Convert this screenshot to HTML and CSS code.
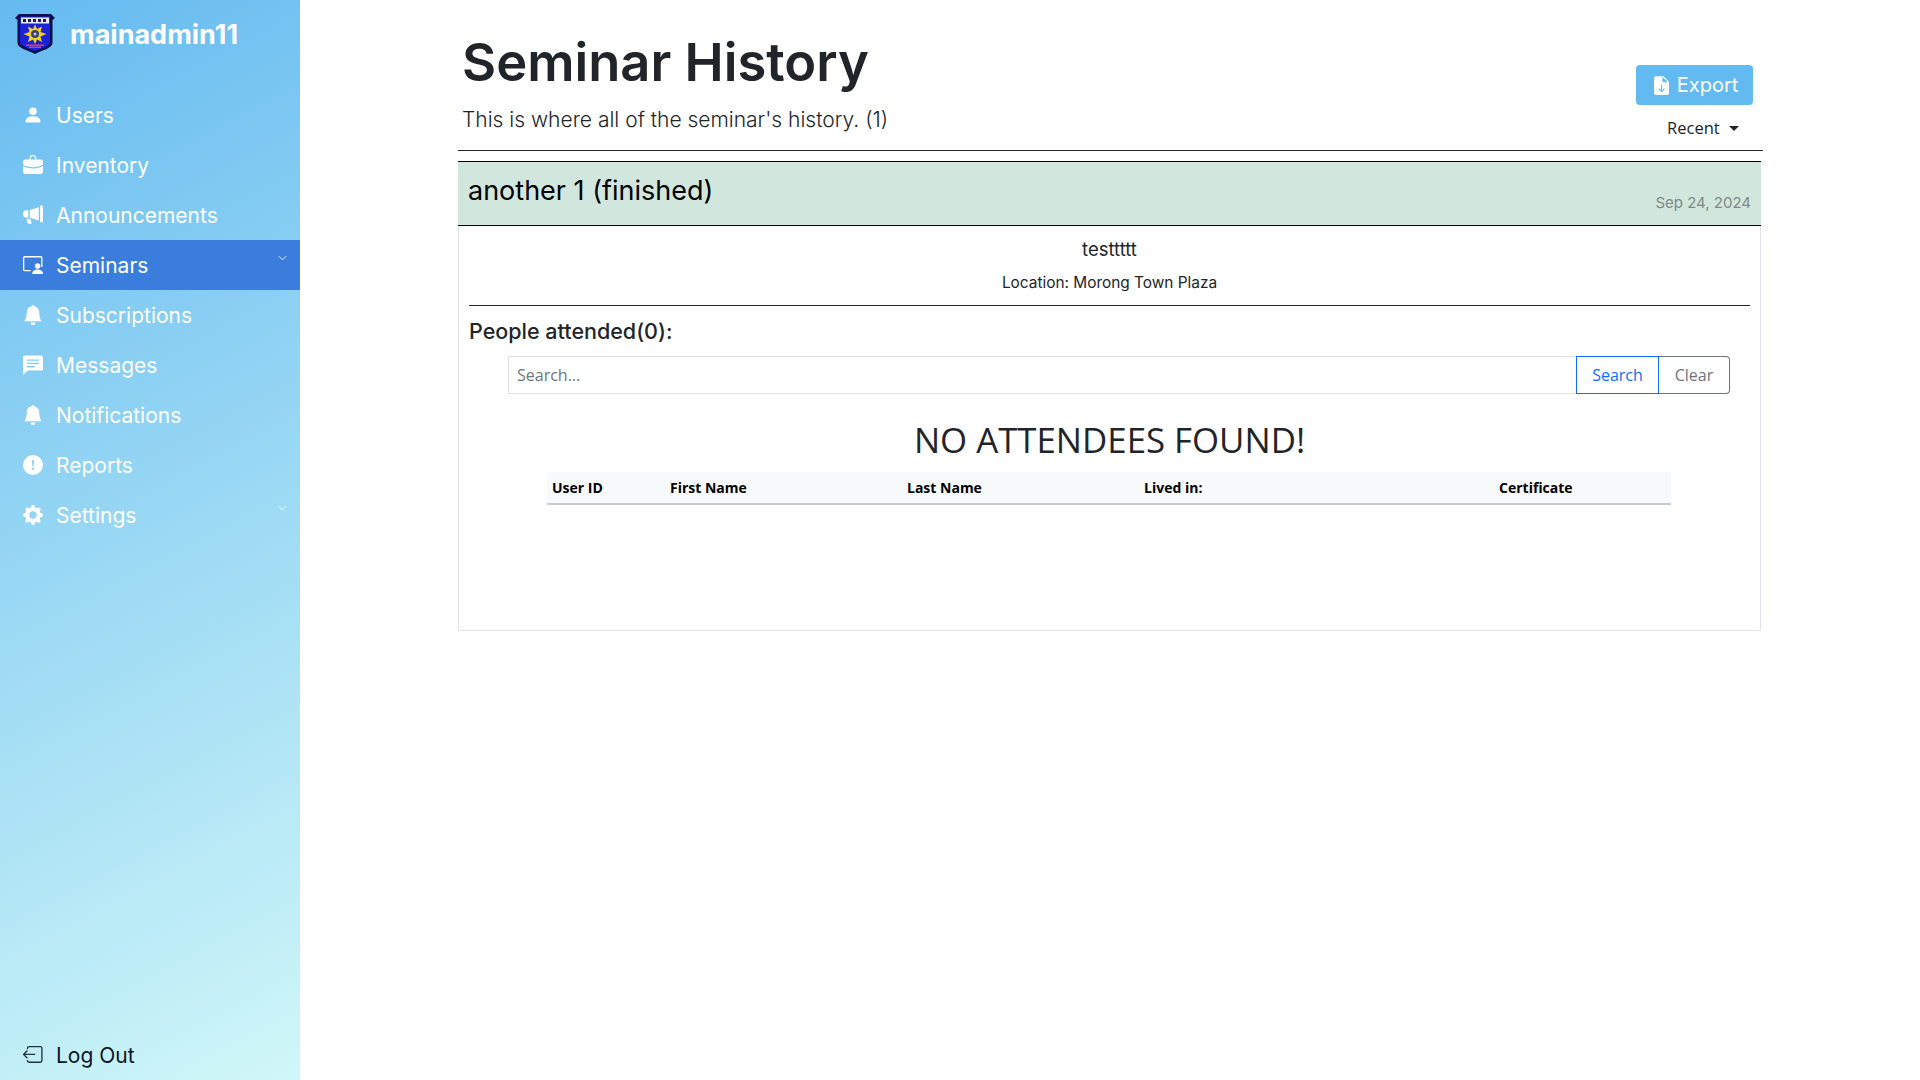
FILE: index.html
```html
<!DOCTYPE html>
<html lang="en">
<head>
    <meta charset="UTF-8">
    <title>Seminar History</title>
    <link rel="stylesheet" href="styles.css">
</head>
<body>
    <aside class="sidebar">
        <div class="brand">
            <svg class="logo" viewBox="0 0 40 42">
                <path d="M0 5 L4 1 H36 L40 5 L37.500 7 V30 C37.500 35 28 37 20 41 C12 37 2.500 35 2.500 30 V7 Z" fill="#0b0f4a"/>
                <path d="M5 3.500 H35 V29 C35 33 27 35 20 38 C13 35 5 33 5 29 Z" fill="#1c22d8"/>
                <rect x="6" y="4.500" width="28" height="6" fill="#e8e8f4"/>
                <path d="M8 6 h3 v3 h-3z M13 6 h3 v3 h-3z M18 6 h3 v3 h-3z M23 6 h3 v3 h-3z M28 6 h3 v3 h-3z" fill="#1a1a60"/>
                <path d="M20 11.500 L22 16 L27 13.500 L25.500 19 L31.500 21 L25.500 23.500 L27 29 L22 26.500 L20 31 L18 26.500 L13 29 L14.500 23.500 L8.500 21 L14.500 19 L13 13.500 L18 16 Z" fill="#f2d21a"/>
                <circle cx="20" cy="21" r="4" fill="#3a3f7a"/>
                <circle cx="20" cy="21" r="1.500" fill="#c9cbe0"/>
                <rect x="11" y="31.500" width="18" height="1.500" fill="#d8425a"/>
                <rect x="14" y="33.500" width="12" height="1.500" fill="#d8425a"/>
            </svg>
            <span class="brand-name">mainadmin11</span>
        </div>
        <nav class="menu">
            <a class="menu-item">
                <svg class="icon" viewBox="0 0 16 16"><path d="M3 14s-1 0-1-1 1-4 6-4 6 3 6 4-1 1-1 1H3Zm5-6a3 3 0 1 0 0-6 3 3 0 0 0 0 6Z"/></svg>
                <span>Users</span>
            </a>
            <a class="menu-item">
                <svg class="icon" viewBox="1 1 18 18"><path d="M7 5V3.500C7 2.100 8.100 1 9.500 1h1C11.900 1 13 2.100 13 3.500V5h-1.200V3.500c0-.7-.6-1.300-1.300-1.300h-1c-.7 0-1.300.6-1.300 1.300V5Z"/><path d="M3 5h14c1.100 0 2 .9 2 2v2.500c-2 1.700-5.500 2.500-9 2.500s-7-.8-9-2.500V7c0-1.100.9-2 2-2Z"/><path d="M1 11c2.300 1.500 5.600 2.200 9 2.200s6.700-.7 9-2.200v5c0 1.100-.9 2-2 2H3c-1.100 0-2-.9-2-2v-5Z"/></svg>
                <span>Inventory</span>
            </a>
            <a class="menu-item">
                <svg class="icon" viewBox="1 1 18 18"><path d="M19 1.500v15h-2.600v-15Z"/><path d="M15.200 3v12L7 12.500V5.500Z"/><path d="M5.800 5.700v6.600H3.500C2 12.300 1 11 1 9s1-3.300 2.500-3.300Z"/><path d="M4 13.300h3.500l1.500 4.500H5.500Z"/></svg>
                <span>Announcements</span>
            </a>
            <a class="menu-item active">
                <svg class="icon" viewBox="1 1 18.500 18.500"><path d="M2.500 2h15A1.500 1.500 0 0 1 19 3.500V12h-1.200V3.500a.3.300 0 0 0-.3-.3h-15a.3.300 0 0 0-.3.300v11c0 .2.100.3.300.3H8V16H2.500A1.500 1.500 0 0 1 1 14.500v-11A1.500 1.500 0 0 1 2.500 2Z"/><circle cx="14.500" cy="11.200" r="2.500"/><path d="M9.500 18.500c0-2.500 2-4 5-4s5 1.500 5 4Z"/></svg>
                <span>Seminars</span>
                <svg class="chevron" viewBox="0 0 10 6"><path d="M1 1l4 4 4-4"/></svg>
            </a>
            <a class="menu-item">
                <svg class="icon" viewBox="0 0 16 16"><path d="M8 16a2 2 0 0 0 2-2H6a2 2 0 0 0 2 2zm.995-14.901a1 1 0 1 0-1.990 0A5.002 5.002 0 0 0 3 6c0 1.098-.5 6-2 7h14c-1.500-1-2-5.902-2-7 0-2.420-1.720-4.440-4.005-4.901z"/></svg>
                <span>Subscriptions</span>
            </a>
            <a class="menu-item">
                <svg class="icon" viewBox="1 1 18 18"><path fill-rule="evenodd" d="M2.500 1.500h15c.8 0 1.500.7 1.500 1.500v10.500c0 .8-.7 1.500-1.500 1.500H5.500L1 19V3c0-.8.7-1.500 1.500-1.500ZM4.500 5v1.200h11V5Zm0 3v1.200h11V8Zm0 3v1.200h7V11Z"/></svg>
                <span>Messages</span>
            </a>
            <a class="menu-item">
                <svg class="icon" viewBox="0 0 16 16"><path d="M8 16a2 2 0 0 0 2-2H6a2 2 0 0 0 2 2zm.995-14.901a1 1 0 1 0-1.990 0A5.002 5.002 0 0 0 3 6c0 1.098-.5 6-2 7h14c-1.500-1-2-5.902-2-7 0-2.420-1.720-4.440-4.005-4.901z"/></svg>
                <span>Notifications</span>
            </a>
            <a class="menu-item">
                <svg class="icon" viewBox="0 0 16 16"><path d="M16 8A8 8 0 1 1 0 8a8 8 0 0 1 16 0zM8 4a.905.905 0 0 0-.9.995l.35 3.507a.552.552 0 0 0 1.100 0l.35-3.507A.905.905 0 0 0 8 4zm.002 6a1 1 0 1 0 0 2 1 1 0 0 0 0-2z"/></svg>
                <span>Reports</span>
            </a>
            <a class="menu-item">
                <svg class="icon" viewBox="0 0 16 16"><path d="M9.405 1.050c-.413-1.400-2.397-1.400-2.810 0l-.1.340a1.464 1.464 0 0 1-2.105.872l-.31-.17c-1.283-.698-2.686.705-1.987 1.987l.169.311c.446.820.023 1.841-.872 2.105l-.34.1c-1.400.413-1.400 2.397 0 2.810l.34.1a1.464 1.464 0 0 1 .872 2.105l-.17.31c-.698 1.283.705 2.686 1.987 1.987l.311-.169a1.464 1.464 0 0 1 2.105.872l.1.340c.413 1.400 2.397 1.400 2.810 0l.1-.34a1.464 1.464 0 0 1 2.105-.872l.31.170c1.283.698 2.686-.705 1.987-1.987l-.169-.311a1.464 1.464 0 0 1 .872-2.105l.34-.1c1.400-.413 1.400-2.397 0-2.810l-.34-.1a1.464 1.464 0 0 1-.872-2.105l.17-.31c.698-1.283-.705-2.686-1.987-1.987l-.311.169a1.464 1.464 0 0 1-2.105-.872l-.1-.34zM8 10.930a2.929 2.929 0 1 1 0-5.860 2.929 2.929 0 0 1 0 5.858z"/></svg>
                <span>Settings</span>
                <svg class="chevron" viewBox="0 0 10 6"><path d="M1 1l4 4 4-4"/></svg>
            </a>
        </nav>
        <a class="logout">
            <svg class="logout-icon" viewBox="1 2 18 16"><path d="M5 4.500V4a1.500 1.500 0 0 1 1.500-1.500h10A1.500 1.500 0 0 1 18 4v11a1.500 1.500 0 0 1-1.500 1.500h-10A1.500 1.500 0 0 1 5 15v-.5"/><path d="M12 9.500H1.500M5 6 1.500 9.500 5 13"/></svg>
            <span>Log Out</span>
        </a>
    </aside>

    <main class="main">
        <div class="page-head">
            <div class="page-title">
                <h1>Seminar History</h1>
                <p>This is where all of the seminar's history. (1)</p>
            </div>
            <div class="page-actions">
                <button class="export-btn">
                    <svg class="export-icon" viewBox="0 0 16 20"><path fill-rule="evenodd" d="M2 0h8l6 6v12a2 2 0 0 1-2 2H2a2 2 0 0 1-2-2V2a2 2 0 0 1 2-2Zm7 1v5.500h6ZM7.400 9v6L5.300 12.900l-.8.8L8 17.200l3.500-3.500-.8-.8L8.600 15V9Z"/></svg>
                    Export
                </button>
                <div class="sort">Recent <span class="caret"></span></div>
            </div>
        </div>
        <hr class="head-rule">

        <section class="card">
            <header class="card-head">
                <h2>another 1 (finished)</h2>
                <span class="card-date">Sep 24, 2024</span>
            </header>
            <div class="card-body">
                <p class="desc">testtttt</p>
                <p class="location">Location: Morong Town Plaza</p>
                <hr class="body-rule">
                <h3>People attended(0):</h3>
                <form class="search">
                    <input class="search-input" type="text" placeholder="Search...">
                    <button class="search-btn" type="button">Search</button>
                    <button class="clear-btn" type="button">Clear</button>
                </form>
                <h2 class="empty">NO ATTENDEES FOUND!</h2>
                <div class="table-row">
                    <span class="col-id">User ID</span>
                    <span class="col-name">First Name</span>
                    <span class="col-name">Last Name</span>
                    <span class="col-lived">Lived in:</span>
                    <span>Certificate</span>
                </div>
            </div>
        </section>
    </main>
</body>
</html>
```

FILE: styles.css
```css
* {
    margin: 0;
    padding: 0;
    box-sizing: border-box;
}

body {
    font-family: "Inter", "Open Sans", sans-serif;
    background: #ffffff;
    color: #212529;
    display: flex;
    height: 1080px;
    overflow: hidden;
}

.sidebar {
    width: 300px;
    flex-shrink: 0;
    height: 100%;
    display: flex;
    flex-direction: column;
    background: linear-gradient(152deg, #65baf0 0%, #d0f7f8 100%);
}

.brand {
    display: flex;
    align-items: center;
    height: 68px;
    padding-left: 15px;
    gap: 15px;
}

.logo {
    width: 40px;
    height: 42px;
}

.brand-name {
    color: #ffffff;
    font-size: 27px;
    font-weight: 700;
}

.menu {
    margin-top: 22px;
    flex: 1;
}

.menu-item {
    position: relative;
    display: flex;
    align-items: center;
    height: 50px;
    padding-left: 23px;
    gap: 13px;
    color: #ffffff;
    font-size: 21px;
}

.menu-item.active {
    background: #3b7ddd;
}

.icon {
    width: 20px;
    height: 20px;
    fill: #ffffff;
}

.chevron {
    position: absolute;
    top: 15px;
    right: 13px;
    width: 9px;
    height: 6px;
    fill: none;
    stroke: #ffffff;
    stroke-width: 1;
}

.logout {
    display: flex;
    align-items: center;
    height: 50px;
    padding-left: 23px;
    gap: 13px;
    color: #0b1524;
    font-size: 21px;
}

.logout-icon {
    width: 20px;
    height: 18px;
    fill: none;
    stroke: #24323f;
    stroke-width: 1.200;
}

.main {
    padding-left: 158px;
    width: 1463px;
}

.page-head {
    display: flex;
    justify-content: space-between;
    height: 150px;
    padding: 0 10px 0 4px;
}

.page-title h1 {
    font-size: 52.500px;
    font-weight: 600;
    line-height: 60px;
    margin-top: 32px;
}

.page-title p {
    font-size: 21px;
    line-height: 30px;
    margin-top: 13px;
    font-weight: 300;
}

.page-actions {
    display: flex;
    flex-direction: column;
    align-items: flex-end;
    padding-top: 65px;
}

.export-btn {
    display: flex;
    align-items: center;
    justify-content: center;
    gap: 8px;
    width: 117px;
    height: 40px;
    padding-left: 3px;
    border: none;
    border-radius: 4px;
    background: #63baf1;
    color: #ffffff;
    font-family: inherit;
    font-size: 20px;
}

.export-icon {
    width: 15px;
    height: 19px;
    fill: #ffffff;
}

.sort {
    margin-top: 11px;
    padding-right: 14px;
    font-family: "Open Sans", sans-serif;
    font-size: 16.500px;
    line-height: 23px;
}

.caret {
    display: inline-block;
    margin-left: 5px;
    vertical-align: 3px;
    border-top: 5px solid #212529;
    border-left: 5px solid transparent;
    border-right: 5px solid transparent;
}

.head-rule {
    border: none;
    border-top: 1px solid #212529;
}

.card {
    width: 1303px;
    height: 470px;
    margin-top: 10px;
    border: 1px solid #e0e3ea;
    border-top: none;
}

.card-head {
    display: flex;
    justify-content: space-between;
    height: 65px;
    margin: 0 -1px;
    padding: 0 10px;
    background: #d1e7dd;
    border-top: 1px solid #000000;
    border-bottom: 1px solid #000000;
}

.card-head h2 {
    font-size: 27px;
    font-weight: 400;
    line-height: 36px;
    margin-top: 11px;
    color: #000000;
}

.card-date {
    font-size: 15px;
    color: #7f8a86;
    margin-top: 31px;
}

.card-body {
    padding: 0 10px;
}

.desc {
    margin-top: 11px;
    text-align: center;
    font-size: 18.500px;
    line-height: 24px;
}

.location {
    margin-top: 11px;
    text-align: center;
    font-size: 15.400px;
    line-height: 22px;
}

.body-rule {
    border: none;
    border-top: 1px solid #212529;
    margin-top: 11px;
}

.card-body h3 {
    font-size: 21.500px;
    font-weight: 500;
    line-height: 28px;
    margin-top: 11px;
}

.search {
    display: flex;
    height: 38px;
    margin: 11px 20px 0 39px;
    font-family: "Open Sans", sans-serif;
}

.search-input {
    flex: 1;
    height: 38px;
    padding: 0 8px;
    border: 1px solid #dee2e6;
    border-right: none;
    font-family: inherit;
    font-size: 16px;
    outline: none;
}

.search-input::placeholder {
    color: #6c757d;
}

.search-btn {
    width: 83px;
    background: #ffffff;
    border: 1px solid #0d6efd;
    color: #0d6efd;
    font-family: inherit;
    font-size: 16px;
}

.clear-btn {
    width: 71px;
    background: #ffffff;
    border: 1px solid #6c757d;
    border-left: none;
    border-radius: 0 4px 4px 0;
    color: #6c757d;
    font-family: inherit;
    font-size: 16px;
}

.empty {
    margin-top: 24px;
    text-align: center;
    font-family: "Open Sans", sans-serif;
    font-size: 34.800px;
    font-weight: 500;
    line-height: 44px;
}

.table-row {
    display: flex;
    align-items: center;
    height: 33px;
    margin: 10px 79px 0 78px;
    padding-left: 5px;
    background: #f8f9fa;
    border-bottom: 2px solid #c9cccf;
    color: #000000;
    font-family: "Open Sans", sans-serif;
    font-size: 14px;
    font-weight: 700;
}

.col-id {
    width: 118px;
}

.col-name {
    width: 237px;
}

.col-lived {
    width: 355px;
}
```
